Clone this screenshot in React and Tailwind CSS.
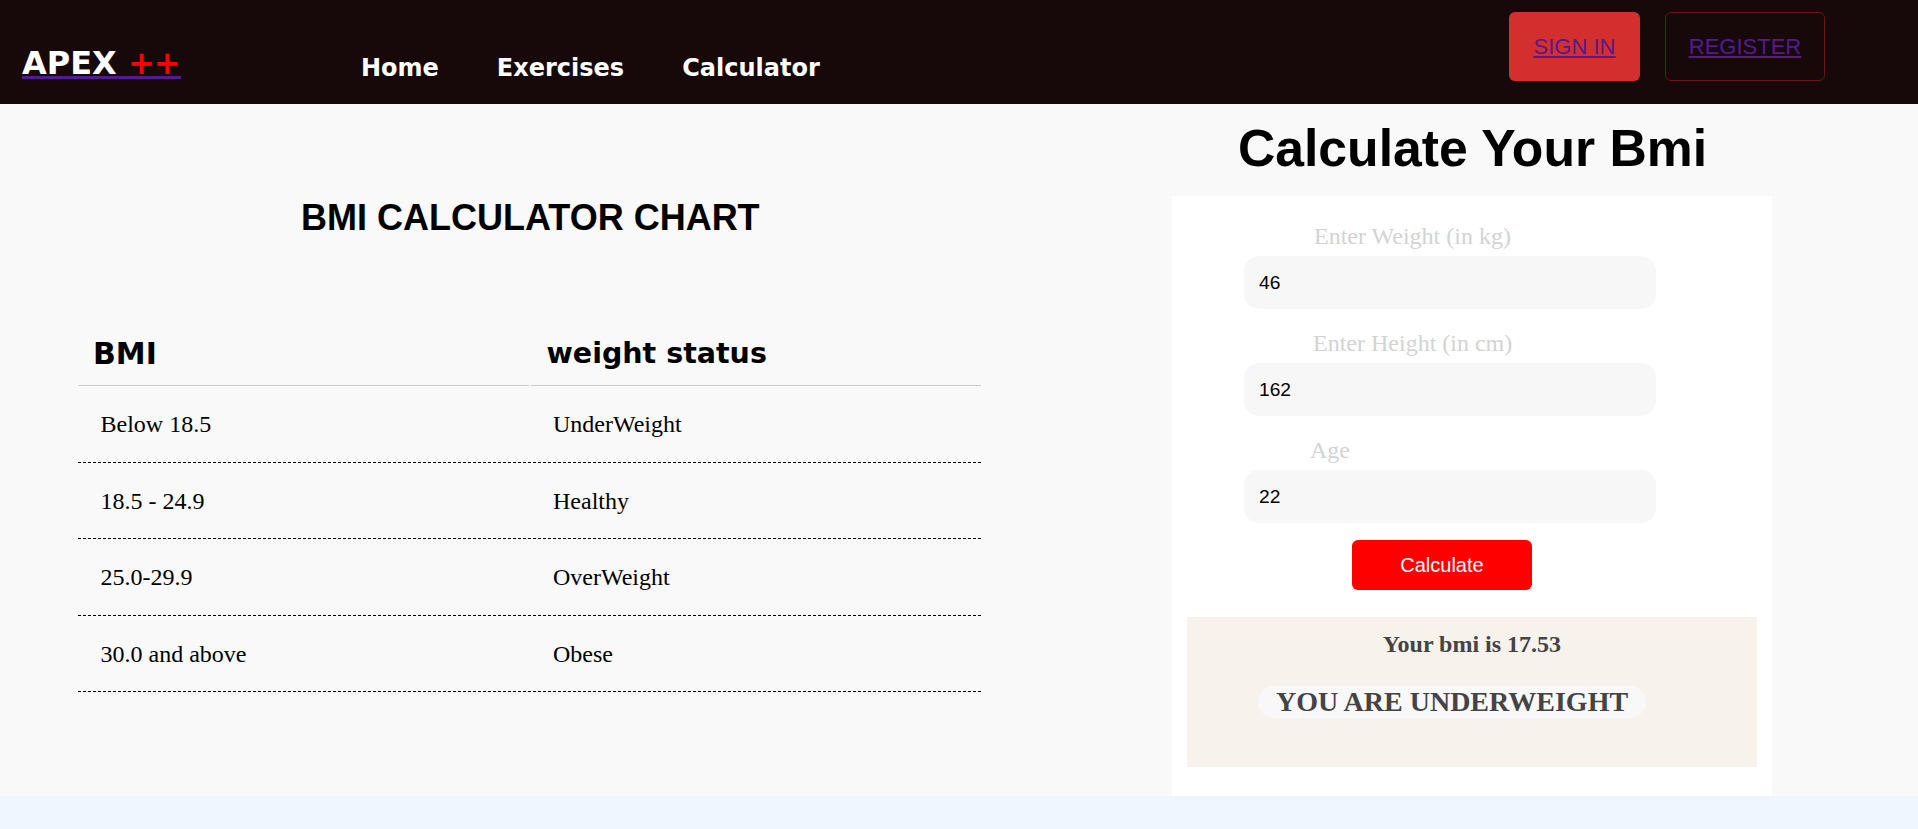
export default function App() {
  const rows = [["Below 18.5", "UnderWeight"], ["18.5 - 24.9", "Healthy"], ["25.0-29.9", "OverWeight"], ["30.0 and above", "Obese"]];
  const fields = [["Enter Weight (in kg)", "46", "ml-[70px]"], ["Enter Height (in cm)", "162", "ml-[69px]"], ["Age", "22", "ml-[66px]"]];
  return (
    <div className="min-h-[829px] w-[1918px] overflow-hidden bg-[#eff6ff] font-['Liberation_Serif',serif]">
      <header className="flex h-[104px] items-start bg-[#170809]">
        <a className="ml-[22px] mt-[44px] block h-[35px] w-[159px] border-b-[3px] border-[#551a8b] font-['DejaVu_Sans',sans-serif] text-[32px] font-bold leading-[38px] whitespace-nowrap text-white">
          APEX <span className="tracking-[-1px] text-[#ff0000]">++</span>
        </a>
        <nav className="ml-[180px] mt-[53px] flex gap-[58px] font-['DejaVu_Sans',sans-serif] text-[24px] font-bold leading-[30px] text-white">
          <span>Home</span><span>Exercises</span><span>Calculator</span>
        </nav>
        <div className="ml-auto mr-[93px] mt-[12px] flex gap-[25px] font-['Liberation_Sans',sans-serif] text-[22px] text-[#551a8b] underline">
          <a className="flex h-[69px] w-[131px] items-center justify-center rounded-[6px] bg-[#d32f2f]">SIGN IN</a>
          <a className="flex h-[69px] w-[160px] items-center justify-center rounded-[6px] border border-[#6b1518]">REGISTER</a>
        </div>
      </header>
      <main className="flex h-[692px] bg-[#f9f9f9]">
        <section className="ml-[78px] w-[903px]">
          <h2 className="mt-[93px] ml-[223px] font-['Liberation_Sans',sans-serif] text-[36px] font-bold leading-[42px] text-black">BMI CALCULATOR CHART</h2>
          <div className="mt-[80px] grid grid-cols-2 gap-x-[2px]">
            <div className="h-[67px] border-b border-[#cccccc] pl-[15px] pt-[18px] font-['DejaVu_Sans',sans-serif] text-[30px] font-bold leading-[34px] text-black">BMI</div>
            <div className="h-[67px] border-b border-[#cccccc] pl-[16px] pt-[18px] font-['DejaVu_Sans',sans-serif] text-[28.5px] font-bold leading-[34px] text-black">weight status</div>
            {rows.map(([a, b]) => (
              <div key={a} className="col-span-2 grid h-[76.5px] grid-cols-2 gap-x-[2px] border-b border-dashed border-black text-[24px] leading-[28px] text-black">
                <span className="pl-[22.5px] pt-[24px]">{a}</span>
                <span className="pl-[22.5px] pt-[24px]">{b}</span>
              </div>
            ))}
          </div>
        </section>
        <section className="ml-[191px] w-[600px]">
          <h1 className="ml-[1px] mt-[12px] h-[80px] text-center font-['Liberation_Sans',sans-serif] text-[51.7px] font-bold leading-[64px] text-black">Calculate Your Bmi</h1>
          <div className="h-[600px] bg-white px-[15px] pt-[26px]">
            <div className="ml-[57px] flex w-[412px] flex-col gap-[20px]">
              {fields.map(([l, v, m]) => (
                <div key={l}>
                  <div className={`${m} h-[34px] text-[24px] leading-[28px] text-[#d3d3d3]`}>{l}</div>
                  <input readOnly value={v} className="block h-[53px] w-[412px] rounded-[15px] bg-[#f7f7f7] pl-[15px] font-['Liberation_Sans',sans-serif] text-[19.2px] text-black outline-none" />
                </div>
              ))}
            </div>
            <button className="ml-[165px] mt-[17px] block h-[50px] w-[180px] rounded-[6px] bg-[#ff0000] font-['Liberation_Sans',sans-serif] text-[20px] text-white">Calculate</button>
            <div className="mt-[27px] h-[150px] w-[570px] bg-[#f7f2ec] pt-[13px] text-[#444444]">
              <div className="text-center text-[24px] font-bold leading-[28px]">Your bmi is 17.53</div>
              <div className="ml-[71px] mt-[28px] flex h-[32px] w-[388px] items-center justify-center rounded-[16px] bg-[#f8f8f8] text-[28px] font-bold leading-[32px] whitespace-nowrap">YOU ARE UNDERWEIGHT</div>
            </div>
          </div>
        </section>
      </main>
    </div>
  );
}
